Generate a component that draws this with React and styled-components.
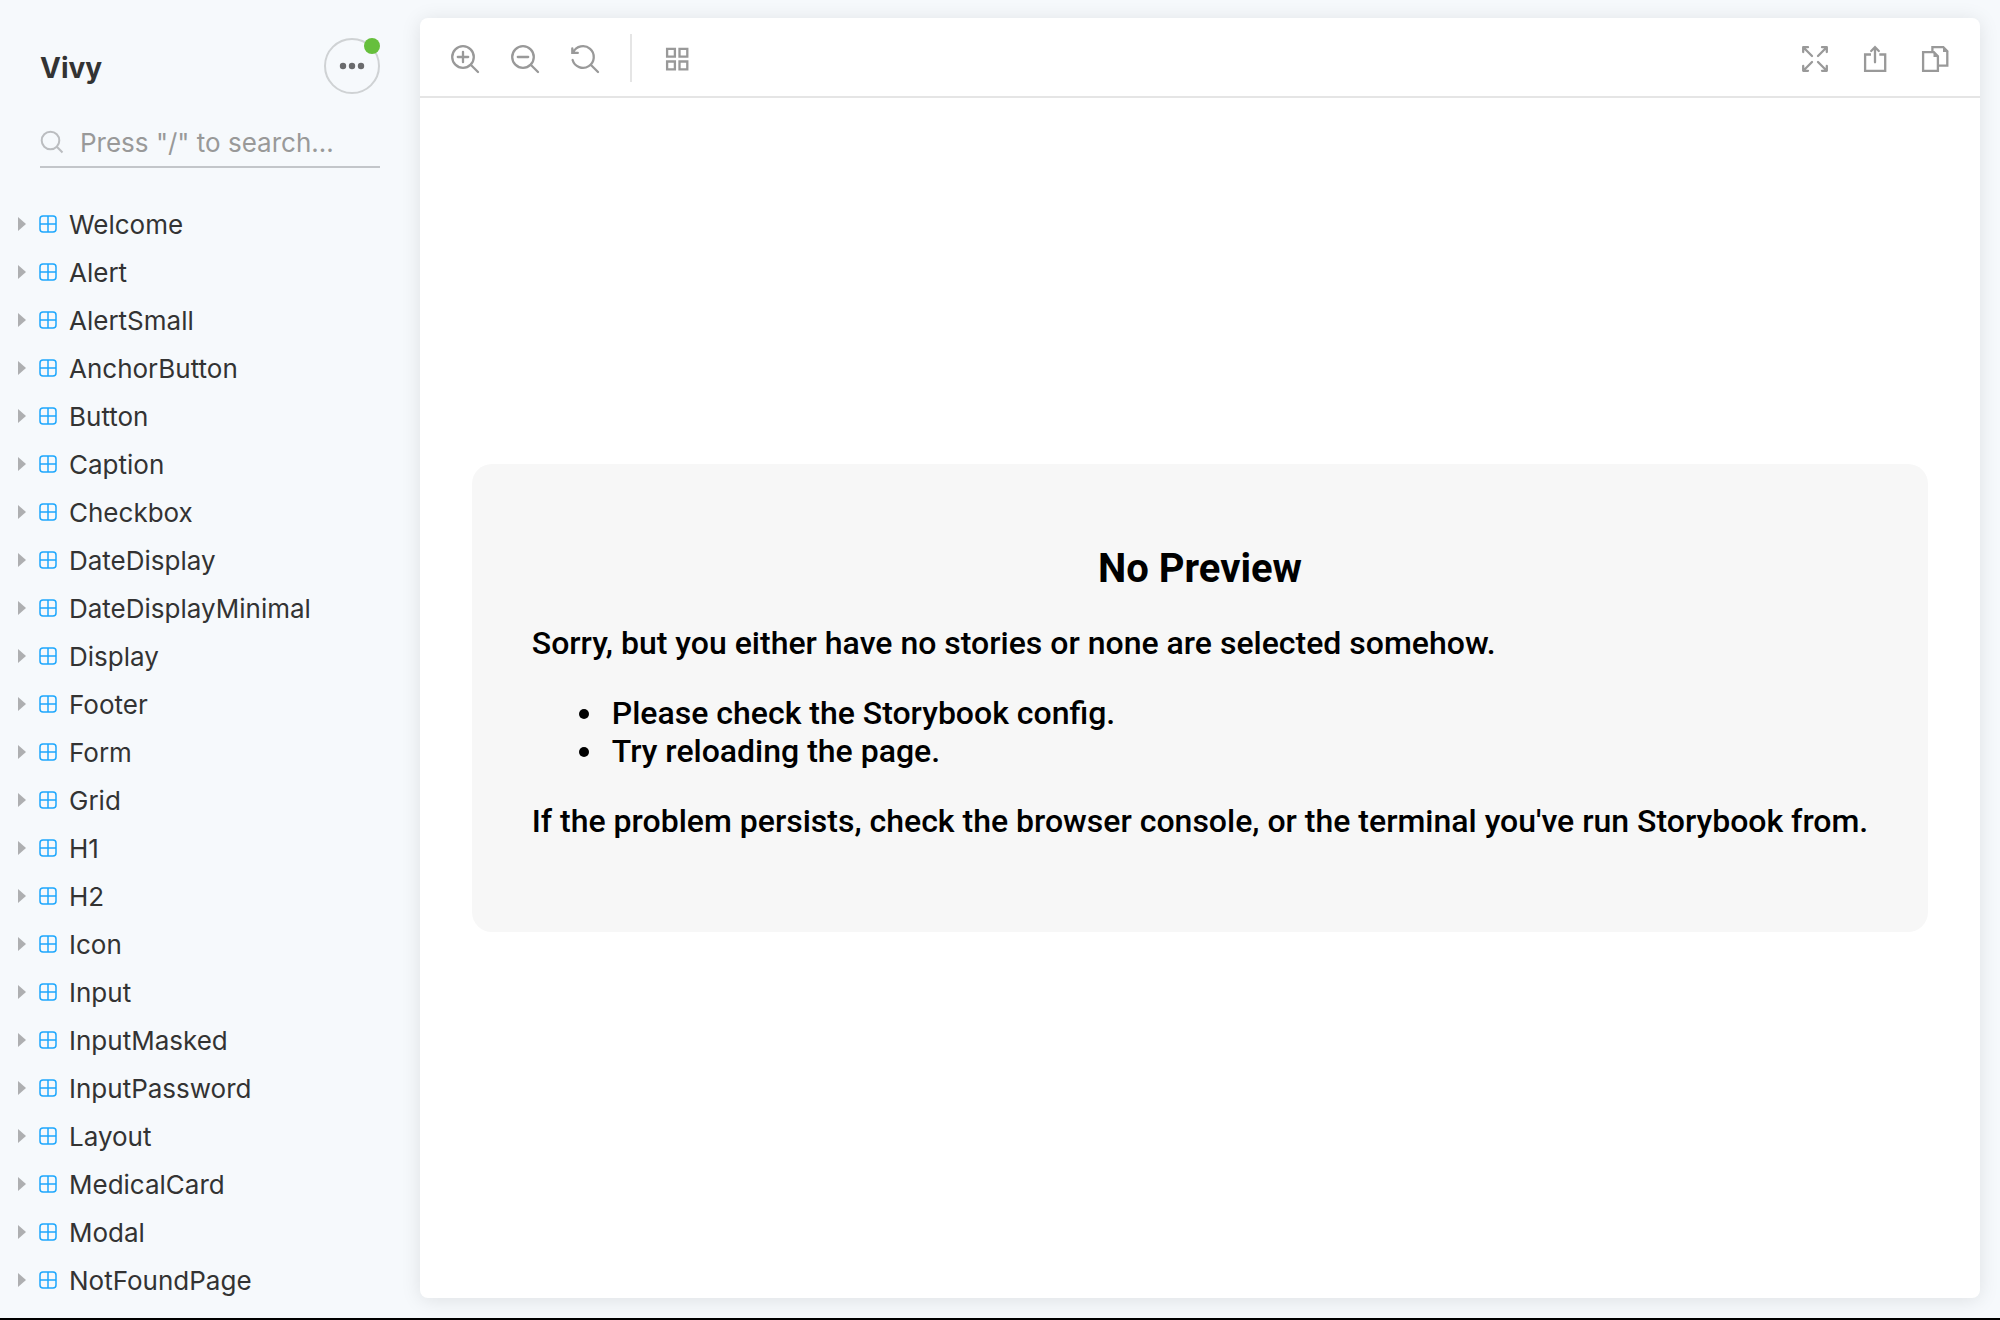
import React, { useState } from "react";
import styled, { createGlobalStyle } from "styled-components";

const GlobalStyle = createGlobalStyle`
  *, *::before, *::after { box-sizing: border-box; }
  html, body, #root { height: 100%; }
  body {
    margin: 0;
    overflow: hidden;
    background: #f6f9fc;
    color: #333333;
    font-family: Inter, "Liberation Sans", sans-serif;
    font-size: 26px;
  }
  button, input { font: inherit; }
`;

const Layout = styled.div`
  display: grid;
  grid-template-columns: 380px minmax(0, 1fr);
  height: 100%;
  border-bottom: 2px solid #000000;
  overflow: hidden;
`;

const Sidebar = styled.nav`
  padding: 38px 0 0;
  min-height: 0;
  overflow: hidden;
`;

const Brand = styled.header`
  display: flex;
  align-items: center;
  justify-content: space-between;
  padding-left: 40px;
`;

const BrandName = styled.h1`
  margin: 4px 0 0;
  font-size: 28px;
  line-height: 36px;
  font-weight: 700;
`;

const MenuButton = styled.button`
  position: relative;
  display: flex;
  align-items: center;
  justify-content: center;
  width: 56px;
  height: 56px;
  padding: 0;
  border: 2px solid #cfd2d4;
  border-radius: 50%;
  background: transparent;
  color: #6a6b6d;

  &::after {
    content: "";
    position: absolute;
    top: -2px;
    right: -2px;
    width: 16px;
    height: 16px;
    border-radius: 50%;
    background: #66bf3c;
  }
`;

const Search = styled.label`
  display: flex;
  align-items: center;
  gap: 16px;
  height: 50px;
  margin: 24px 0 0 40px;
  border-bottom: 2px solid #c3c6ca;
  color: #bbbdc0;
`;

const SearchInput = styled.input`
  flex: 1;
  min-width: 0;
  height: 46px;
  padding: 0;
  border: 0;
  outline: 0;
  background: transparent;
  color: #333333;

  &::placeholder { color: #999999; opacity: 1; }
`;

const Tree = styled.ul`
  margin: 32px 0 0;
  padding: 0;
  list-style: none;
`;

const TreeItem = styled.button`
  display: flex;
  align-items: center;
  width: 100%;
  height: 48px;
  padding: 0 0 0 18px;
  border: 0;
  background: transparent;
  color: #333333;
  text-align: left;
`;

const Caret = styled.span`
  border: 7px solid transparent;
  border-left: 8px solid #aeafb1;
  border-right-width: 0;
  margin-right: 13px;
`;

const TreeIcon = styled.svg`
  width: 18px;
  height: 18px;
  margin-right: 12px;
`;

const Main = styled.main`
  display: flex;
  flex-direction: column;
  margin: 18px 20px 20px 40px;
  border-radius: 8px;
  background: #ffffff;
  box-shadow: 0 2px 20px rgba(0, 0, 0, 0.1);
`;

const Toolbar = styled.div`
  display: flex;
  justify-content: space-between;
  height: 80px;
  padding: 2px 30px 0;
  border-bottom: 2px solid #e5e5e5;
`;

const ToolGroup = styled.div`
  display: flex;
  align-items: center;
  gap: 32px;
`;

const ToolButton = styled.button`
  display: flex;
  width: 28px;
  height: 28px;
  padding: 0;
  border: 0;
  background: transparent;
  color: #999999;
`;

const ToolSvg = styled.svg`
  width: 28px;
  height: 28px;
  overflow: visible;
`;

const Divider = styled.span`
  width: 2px;
  height: 48px;
  background: #e5e5e5;
`;

const Canvas = styled.div`
  display: flex;
  flex: 1;
  padding: 32px;
`;

const Notice = styled.section`
  margin: auto;
  padding: 60px;
  border-radius: 20px;
  background: #f7f7f7;
  color: #000000;
  font: 500 32px/38px Roboto, "Liberation Sans", sans-serif;

  p, ul { margin: 32px 0; }
  ul { padding-left: 74px; }
  li { padding-left: 6px; }
`;

const NoticeTitle = styled.h2`
  margin: 21px 0 32px;
  font-size: 40px;
  line-height: 47px;
  font-weight: 700;
  text-align: center;
`;

const StrokeIcon = ({ children }) => (
  <ToolSvg viewBox="0 0 28 28" fill="none" stroke="currentColor" strokeWidth="2.3" aria-hidden="true">
    {children}
  </ToolSvg>
);

const ZoomInIcon = () => (
  <StrokeIcon>
    <circle cx="13" cy="13" r="10.8" />
    <path d="M20.700 20.700l7.300 7.300M13 7.800v10.400M7.800 13h10.400" strokeLinecap="round" />
  </StrokeIcon>
);

const ZoomOutIcon = () => (
  <StrokeIcon>
    <circle cx="13" cy="13" r="10.8" />
    <path d="M20.700 20.700l7.300 7.300M7.800 13h10.400" strokeLinecap="round" />
  </StrokeIcon>
);

const ZoomResetIcon = () => (
  <StrokeIcon>
    <path d="M3.200 8.400A10.800 10.800 0 1 1 2.600 16M20.700 20.700l7.300 7.300M2.300 4.500v4.400h5.500" strokeLinecap="round" />
  </StrokeIcon>
);

const GridIcon = () => (
  <StrokeIcon>
    <path d="M3.100 4.900h7.800v7.800h-7.800zM15.500 4.900h7.800v7.800h-7.800zM3.100 17.500h7.800v7.800h-7.800zM15.500 17.500h7.800v7.800h-7.800z" />
  </StrokeIcon>
);

const ExpandIcon = () => (
  <StrokeIcon>
    <path
      d="M10 12L1.300 3.300M1.200 8V3.200H6M16 12L24.700 3.300M20 3.200h4.800V8M10 18L1.300 26.700M1.200 22v4.800H6M16 18l8.700 8.700M24.800 22v4.800H20"
      strokeLinecap="round"
      strokeLinejoin="round"
    />
  </StrokeIcon>
);

const ShareIcon = () => (
  <StrokeIcon>
    <path d="M9 10.500H3.100v16.300h20.100V10.500H17.300" />
    <path d="M13 18.300V3.500M9.200 7L13 3.200L16.800 7" strokeLinecap="round" />
  </StrokeIcon>
);

const CopyIcon = () => (
  <StrokeIcon>
    <path d="M1.100 8.200h10.800l4 4v14.700H1.100zM10.400 7V3.200H21.300l4 4v14.400H17" />
    <path d="M11.500 7.500L17 13h-5.500zM21 2.500L26.500 8H21z" fill="currentColor" stroke="none" />
  </StrokeIcon>
);

const SearchIcon = () => (
  <svg width="24" height="24" viewBox="0 0 24 24" fill="none" stroke="currentColor" strokeWidth="2" aria-hidden="true">
    <circle cx="10.500" cy="10.500" r="8.800" />
    <path d="M16.800 16.800l5.700 5.700" />
  </svg>
);

const DotsIcon = () => (
  <svg width="26" height="8" viewBox="0 0 26 8" fill="currentColor" aria-hidden="true">
    <circle cx="4" cy="4" r="3.200" />
    <circle cx="13" cy="4" r="3.200" />
    <circle cx="22" cy="4" r="3.200" />
  </svg>
);

const ComponentIcon = () => (
  <TreeIcon viewBox="0 0 18 18" fill="none" stroke="#1ea7fd" strokeWidth="1.5" aria-hidden="true">
    <rect x="1" y="1" width="16" height="16" rx="3" />
    <path d="M9 1v16M1 9h16" />
  </TreeIcon>
);

const COMPONENTS = [
  "Welcome", "Alert", "AlertSmall", "AnchorButton", "Button", "Caption",
  "Checkbox", "DateDisplay", "DateDisplayMinimal", "Display", "Footer",
  "Form", "Grid", "H1", "H2", "Icon", "Input", "InputMasked",
  "InputPassword", "Layout", "MedicalCard", "Modal", "NotFoundPage",
];

export default function App() {
  const [query, setQuery] = useState("");
  const shown = COMPONENTS.filter((name) =>
    name.toLowerCase().includes(query.toLowerCase())
  );

  return (
    <>
      <GlobalStyle />
      <Layout>
        <Sidebar aria-label="Stories">
          <Brand>
            <BrandName>Vivy</BrandName>
            <MenuButton type="button" aria-label="Shortcuts">
              <DotsIcon />
            </MenuButton>
          </Brand>
          <Search>
            <SearchIcon />
            <SearchInput
              type="text"
              aria-label="Search"
              placeholder={'Press "/" to search...'}
              value={query}
              onChange={(event) => setQuery(event.target.value)}
            />
          </Search>
          <Tree>
            {shown.map((name) => (
              <li key={name}>
                <TreeItem type="button">
                  <Caret />
                  <ComponentIcon />
                  {name}
                </TreeItem>
              </li>
            ))}
          </Tree>
        </Sidebar>
        <Main>
          <Toolbar>
            <ToolGroup>
              <ToolButton type="button" aria-label="Zoom in"><ZoomInIcon /></ToolButton>
              <ToolButton type="button" aria-label="Zoom out"><ZoomOutIcon /></ToolButton>
              <ToolButton type="button" aria-label="Reset zoom"><ZoomResetIcon /></ToolButton>
              <Divider />
              <ToolButton type="button" aria-label="Toggle grid"><GridIcon /></ToolButton>
            </ToolGroup>
            <ToolGroup>
              <ToolButton type="button" aria-label="Full screen"><ExpandIcon /></ToolButton>
              <ToolButton type="button" aria-label="Open in new tab"><ShareIcon /></ToolButton>
              <ToolButton type="button" aria-label="Copy link"><CopyIcon /></ToolButton>
            </ToolGroup>
          </Toolbar>
          <Canvas>
            <Notice>
              <NoticeTitle>No Preview</NoticeTitle>
              <p>Sorry, but you either have no stories or none are selected somehow.</p>
              <ul>
                <li>Please check the Storybook config.</li>
                <li>Try reloading the page.</li>
              </ul>
              <p>If the problem persists, check the browser console, or the terminal you've run Storybook from.</p>
            </Notice>
          </Canvas>
        </Main>
      </Layout>
    </>
  );
}
